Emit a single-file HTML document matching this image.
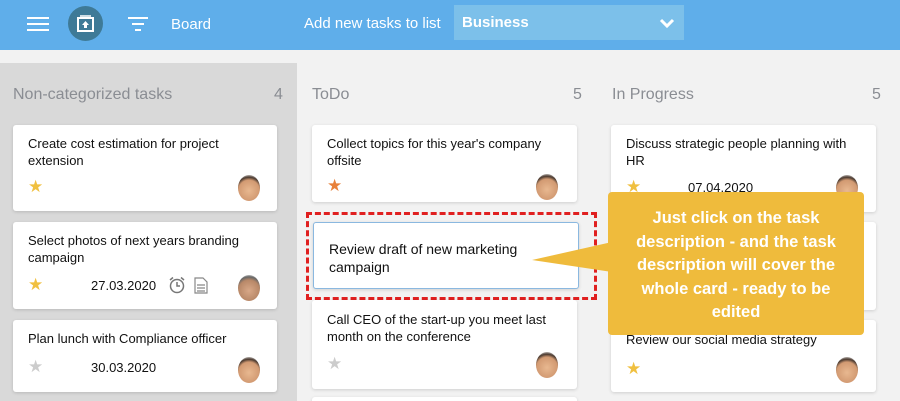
<!DOCTYPE html>
<html><head><meta charset="utf-8"><style>
*{margin:0;padding:0;box-sizing:border-box}
html,body{width:900px;height:401px;overflow:hidden}
body{background:#f2f2f2;font-family:"Liberation Sans",Arial,sans-serif;position:relative}
.hdr{position:absolute;left:0;top:0;width:900px;height:50px;background:#5faeea}
.a{position:absolute}
.col1{left:0;top:63px;width:297px;height:338px;background:#d9d9d9}
.ch{font-size:16px;color:#8a8d93;top:86px}
.card{position:absolute;background:#fff;border-radius:3px;box-shadow:0 1px 3px rgba(0,0,0,.15)}
.t{position:absolute;left:15px;top:10px;font-size:13px;line-height:17px;color:#111;width:228px}
.d{position:absolute;font-size:13px;color:#111}
.av{position:absolute;width:22px;height:26px;border-radius:50%;background:radial-gradient(circle at 50% 60%,#e8b890 0,#d29a72 55%,#4a3a30 70%,#fff 90%)}
.st{position:absolute;font-size:17px;line-height:17px}
</style></head><body>
<div class="hdr"></div>
<svg class="a" style="left:27px;top:16px" width="22" height="16"><g stroke="#fff" stroke-width="2"><line x1="0" y1="2" x2="22" y2="2"/><line x1="0" y1="8" x2="22" y2="8"/><line x1="0" y1="14" x2="22" y2="14"/></g></svg>
<div class="a" style="left:68px;top:6px;width:35px;height:35px;border-radius:50%;background:#3e7a97"></div>
<svg class="a" style="left:76px;top:14px" width="19" height="19"><rect x="2" y="4" width="15" height="13" fill="none" stroke="#fff" stroke-width="2"/><line x1="4" y1="2" x2="15" y2="2" stroke="#fff" stroke-width="1.5"/><path d="M9.5 7 L13 11 H11 V14 H8 V11 H6Z" fill="#fff"/></svg>
<svg class="a" style="left:128px;top:16px" width="20" height="16"><g stroke="#fff" stroke-width="2"><line x1="0" y1="2" x2="20" y2="2"/><line x1="4" y1="8" x2="16" y2="8"/><line x1="7" y1="14" x2="13" y2="14"/></g></svg>
<div class="a" style="left:171px;top:16px;color:#fff;font-size:15px">Board</div>
<div class="a" style="left:304px;top:15px;color:#fff;font-size:15px">Add new tasks to list</div>
<div class="a" style="left:454px;top:5px;width:230px;height:35px;background:#7cc0ea"></div>
<div class="a" style="left:462px;top:14px;color:#fff;font-size:15px;font-weight:bold">Business</div>
<svg class="a" style="left:659px;top:17px" width="16" height="12"><path d="M2 3 L8 9 L14 3" fill="none" stroke="#fff" stroke-width="3"/></svg>

<div class="a col1"></div>
<div class="a ch" style="left:13px">Non-categorized tasks</div><div class="a ch" style="left:274px">4</div>
<div class="a ch" style="left:312px">ToDo</div><div class="a ch" style="left:573px">5</div>
<div class="a ch" style="left:612px">In Progress</div><div class="a ch" style="left:872px">5</div>

<div class="card" style="left:13px;top:125px;width:264px;height:86px"><div class="t">Create cost estimation for project extension</div><div class="st" style="left:15px;top:53px;color:#f0c040">★</div><div class="av" style="left:225px;top:50px"></div></div>
<div class="card" style="left:13px;top:222px;width:264px;height:87px"><div class="t">Select photos of next years branding campaign</div><div class="st" style="left:15px;top:54px;color:#f0c040">★</div><div class="d" style="left:78px;top:56px">27.03.2020</div>
<svg class="a" style="left:155px;top:54px" width="18" height="18"><circle cx="9" cy="10" r="6.5" fill="none" stroke="#777" stroke-width="1.5"/><path d="M9 6 V10 H12 M2 4 L5 1.5 M16 4 L13 1.5" fill="none" stroke="#777" stroke-width="1.5"/></svg>
<svg class="a" style="left:181px;top:55px" width="14" height="17"><path d="M1 1 H9 L13 5 V16 H1Z M3 8 H11 M3 11 H11 M3 14 H11" fill="none" stroke="#888" stroke-width="1.2"/></svg><div class="av" style="left:225px;top:53px;background:radial-gradient(circle at 50% 60%,#d8a888 0,#b88868 55%,#666 72%,#fff 90%)"></div></div>
<div class="card" style="left:13px;top:320px;width:264px;height:72px"><div class="t">Plan lunch with Compliance officer</div><div class="st" style="left:15px;top:38px;color:#ccc">★</div><div class="d" style="left:78px;top:40px">30.03.2020</div><div class="av" style="left:225px;top:37px"></div></div>

<div class="card" style="left:312px;top:125px;width:265px;height:77px"><div class="t">Collect topics for this year's company offsite</div><div class="st" style="left:15px;top:52px;color:#e8803a">★</div><div class="av" style="left:224px;top:49px"></div></div>
<div class="card" style="left:313px;top:222px;width:266px;height:67px;border:1px solid #8ab8e0;border-radius:3px"><div class="t" style="top:17px;font-size:14px;line-height:18px;width:230px">Review draft of new marketing campaign</div></div>
<div class="a" style="left:306px;top:212px;width:291px;height:88px;border:3px dashed #e02020"></div>
<div class="card" style="left:312px;top:300px;width:265px;height:89px"><div class="t" style="top:11px">Call CEO of the start-up you meet last month on the conference</div><div class="st" style="left:15px;top:55px;color:#ccc">★</div><div class="av" style="left:224px;top:52px"></div></div>
<div class="card" style="left:312px;top:397px;width:265px;height:20px"></div>

<div class="card" style="left:611px;top:125px;width:265px;height:87px"><div class="t" style="width:238px">Discuss strategic people planning with HR</div><div class="st" style="left:15px;top:53px;color:#f0c040">★</div><div class="d" style="left:77px;top:55px">07.04.2020</div><div class="av" style="left:225px;top:50px"></div></div>
<div class="card" style="left:611px;top:222px;width:265px;height:88px"><div class="av" style="left:225px;top:55px"></div></div>
<div class="card" style="left:611px;top:320px;width:265px;height:72px"><div class="t" style="top:11px">Review our social media strategy</div><div class="st" style="left:15px;top:40px;color:#f0c040">★</div><div class="av" style="left:225px;top:37px"></div></div>

<svg class="a" style="left:530px;top:240px" width="82" height="40"><path d="M2 20 L82 2 L82 32Z" fill="#efbb3c"/></svg>
<div class="a" style="left:608px;top:192px;width:256px;height:143px;background:#efbb3c;border-radius:4px;color:#fff;font-weight:bold;font-size:16.5px;line-height:23.5px;text-align:center;padding:15px 14px 0">Just click on the task description - and the task description will cover the whole card - ready to be edited</div>
</body></html>
